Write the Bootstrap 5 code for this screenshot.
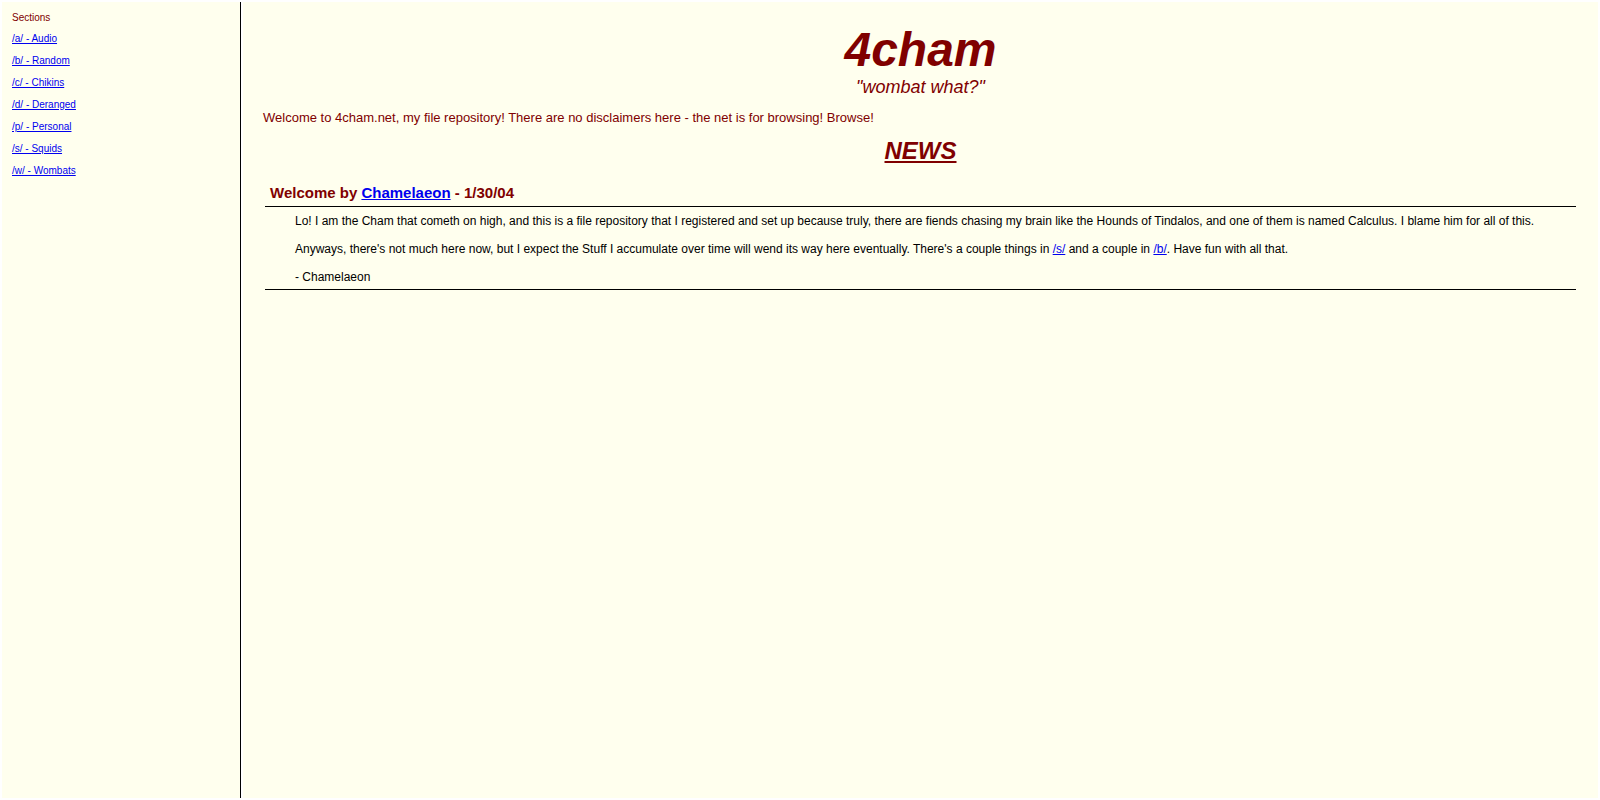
<!DOCTYPE html>
<html lang="en">
<head>
<meta charset="utf-8">
<meta name="viewport" content="width=device-width, initial-scale=1">
<title>4cham</title>
<link href="https://cdn.jsdelivr.net/npm/bootstrap@5.3.0/dist/css/bootstrap.min.css" rel="stylesheet">
<style>
  body { padding: 2px; background: #fff; color: maroon; font-family: "Liberation Sans", Arial, sans-serif; }
  a { color: #0000ee; text-decoration: underline; }
  a:hover { color: #ee0000; }
  .frame { gap: 2px; min-height: calc(100vh - 4px); }
  .pane { background: #ffffee; }
  .sections { width: 239px; padding: 10px; border-right: 1px solid #000; font-size: 10px; line-height: 12px; }
  .sections h2 { font-size: 10px; line-height: 12px; margin-bottom: 9px; }
  .sections ul { gap: 10px; }
  .content { padding: 20px; min-width: 0; }
  .site-title { font-size: 48px; line-height: 56px; }
  .tagline { font-size: 18px; line-height: 18px; margin-bottom: 14px; }
  .intro { font-size: 13px; line-height: 16px; margin-bottom: 11px; }
  .news-title { font-size: 24px; line-height: 28px; margin-bottom: 19px; }
  .post { margin: 0 2px; }
  .post h3 { font-size: 15px; line-height: 18px; padding: 0 5px 4px; }
  .post-body { padding: 7px 30px 5px; border-top: 1px solid #000; border-bottom: 1px solid #000; color: #000; font-size: 12px; line-height: 14px; }
  .post-body p { margin-bottom: 14px; }
</style>
</head>
<body>
<div class="frame d-flex">
  <nav class="pane sections flex-shrink-0" aria-labelledby="sections-title">
    <h2 id="sections-title" class="fw-normal">Sections</h2>
    <ul class="list-unstyled d-flex flex-column mb-0">
      <li><a href="#a">/a/ - Audio</a></li>
      <li><a href="#b">/b/ - Random</a></li>
      <li><a href="#c">/c/ - Chikins</a></li>
      <li><a href="#d">/d/ - Deranged</a></li>
      <li><a href="#p">/p/ - Personal</a></li>
      <li><a href="#s">/s/ - Squids</a></li>
      <li><a href="#w">/w/ - Wombats</a></li>
    </ul>
  </nav>
  <main class="pane content flex-grow-1">
    <header class="text-center fst-italic">
      <h1 class="site-title fw-bold mb-0">4cham</h1>
      <p class="tagline">"wombat what?"</p>
    </header>
    <p class="intro">Welcome to 4cham.net, my file repository! There are no disclaimers here - the net is for browsing! Browse!</p>
    <h2 class="news-title text-center fw-bold fst-italic text-decoration-underline">NEWS</h2>
    <article class="post">
      <h3 class="fw-bold mb-0">Welcome by <a href="#chamelaeon">Chamelaeon</a> - 1/30/04</h3>
      <div class="post-body">
        <p>Lo! I am the Cham that cometh on high, and this is a file repository that I registered and set up because truly, there are fiends chasing my brain like the Hounds of Tindalos, and one of them is named Calculus. I blame him for all of this.</p>
        <p>Anyways, there's not much here now, but I expect the Stuff I accumulate over time will wend its way here eventually. There's a couple things in <a href="#s">/s/</a> and a couple in <a href="#b">/b/</a>. Have fun with all that.</p>
        <p class="mb-0">- Chamelaeon</p>
      </div>
    </article>
  </main>
</div>
<script src="https://cdn.jsdelivr.net/npm/bootstrap@5.3.0/dist/js/bootstrap.bundle.min.js"></script>
</body>
</html>
